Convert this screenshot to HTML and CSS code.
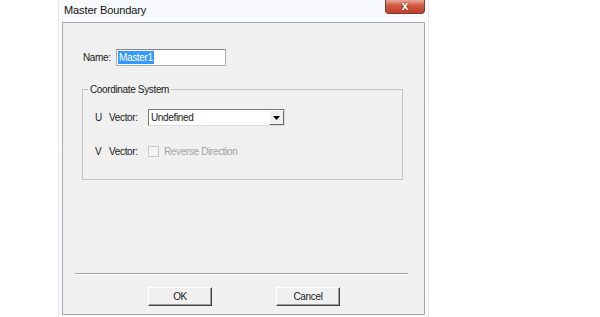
FILE: index.html
```html
<!DOCTYPE html>
<html lang="en">
<head>
    <meta charset="UTF-8">
    <title>Master Boundary</title>
    <link rel="stylesheet" href="styles.css">
</head>
<body>
    <div class="window">
        <div class="titlebar">
            <span class="title">Master Boundary</span>
            <span class="close">x</span>
        </div>
        <div class="client">
            <div class="name-row">
                <label>Name:</label>
                <div class="textbox"><span class="sel">Master1</span></div>
            </div>

            <fieldset class="group">
                <legend>Coordinate System</legend>
                <div class="row">
                    <span class="axis">U</span>
                    <span class="lbl">Vector:</span>
                    <div class="combo">
                        <span class="combo-text">Undefined</span>
                        <span class="combo-btn"><svg width="7" height="4" viewBox="0 0 7 4"><path d="M0 0h7L3.5 4z" fill="#000"/></svg></span>
                    </div>
                </div>
                <div class="row disabled-row">
                    <span class="axis">V</span>
                    <span class="lbl">Vector:</span>
                    <span class="check"></span>
                    <span class="check-text">Reverse Direction</span>
                </div>
            </fieldset>

            <div class="separator"></div>

            <div class="buttons">
                <button>OK</button>
                <button>Cancel</button>
            </div>
        </div>
    </div>
</body>
</html>
```

FILE: styles.css
```css
body {
    margin: 0;
    background: #fff;
    font-family: "Liberation Sans", Arial, sans-serif;
    font-size: 10px;
    letter-spacing: -0.35px;
    color: #1a1a1a;
}
.window {
    margin-left: 58px;
    width: 371px;
    height: 317px;
    background: linear-gradient(#f7f9fc, #fbfcfd 30px, #f9fafb);
    border-left: 1px solid #e4e8ee;
    border-right: 1px solid #e4e8ee;
    box-sizing: border-box;
    padding: 0 3px;
    display: flex;
    flex-direction: column;
}
.titlebar {
    height: 22px;
    display: flex;
    align-items: flex-start;
    justify-content: space-between;
    flex-shrink: 0;
}
.title {
    margin-top: 4px;
    margin-left: 2px;
    font-size: 11px;
    letter-spacing: -0.1px;
    color: #111;
}
.close {
    width: 40px;
    height: 14px;
    background: linear-gradient(#e9a99a, #d0563f 45%, #c0432c);
    border: 1px solid #7d3a2f;
    border-top: none;
    border-radius: 0 0 4px 4px;
    box-sizing: border-box;
    color: #fff;
    font-weight: bold;
    font-size: 12px;
    line-height: 12px;
    text-align: center;
    text-shadow: 0 0 2px #5a1d12;
}
.client {
    flex: 1;
    background: #f0f0f0;
    border: 1px solid #a5a9ae;
    margin-bottom: 2px;
    padding: 0 0 0 20px;
    display: flex;
    flex-direction: column;
}
.name-row {
    margin-top: 26px;
    display: flex;
    align-items: center;
}
.name-row label {
    width: 33px;
}
.textbox {
    width: 110px;
    height: 17px;
    box-sizing: border-box;
    background: #fff;
    border: 1px solid #abadb3;
    border-top-color: #828790;
    padding: 1px 0 0 1px;
}
.sel {
    background: #3399ff;
    color: #fff;
    display: inline-block;
    padding: 0 1px;
    line-height: 13px;
}
.group {
    margin: 18px 0 0 -1px;
    width: 321px;
    height: 96px;
    box-sizing: border-box;
    border: 1px solid #c3c3c3;
    padding: 14px 0 0 12px;
}
.group legend {
    padding: 0 2px;
    margin-left: -7px;
}
.row {
    display: flex;
    align-items: center;
    height: 17px;
}
.axis {
    width: 14px;
}
.lbl {
    width: 39px;
}
.combo {
    width: 137px;
    height: 17px;
    box-sizing: border-box;
    background: #fff;
    border: 1px solid #7a7a7a;
    border-right-color: #dcdcdc;
    border-bottom-color: #dcdcdc;
    display: flex;
    align-items: center;
    justify-content: space-between;
}
.combo-text {
    padding-left: 2px;
}
.combo-btn {
    width: 15px;
    height: 15px;
    box-sizing: border-box;
    background: #f0f0f0;
    border: 1px solid #fff;
    border-right-color: #6a6a6a;
    border-bottom-color: #6a6a6a;
    display: flex;
    align-items: center;
    justify-content: center;
}
.disabled-row {
    margin-top: 17px;
}
.check {
    width: 11px;
    height: 11px;
    box-sizing: border-box;
    border: 1px solid #c8c8c8;
    background: #f4f4f4;
    margin-right: 5px;
}
.check-text {
    color: #a3a3a3;
}
.separator {
    margin: 93px 0 0 -8px;
    width: 333px;
    border-top: 1px solid #a0a0a0;
    border-bottom: 1px solid #fff;
}
.buttons {
    display: flex;
    margin-top: 12px;
    margin-left: 65px;
    gap: 64px;
}
button {
    width: 64px;
    height: 19px;
    font-family: "Liberation Sans", Arial, sans-serif;
    font-size: 10px;
    letter-spacing: -0.35px;
    color: #1a1a1a;
    background: #f0f0f0;
    border: 1px solid;
    border-color: #fff #404040 #404040 #fff;
    box-shadow: inset -1px -1px 0 #a0a0a0;
    padding: 0;
}
```
